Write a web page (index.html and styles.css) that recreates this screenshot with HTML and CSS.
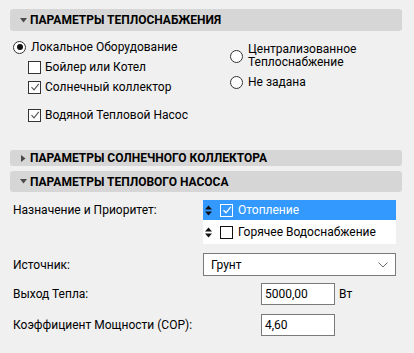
FILE: index.html
```html
<!DOCTYPE html>
<html lang="ru">
<head>
<meta charset="utf-8">
<link rel="stylesheet" href="styles.css">
</head>
<body>
<div class="panel">
  <div class="hdr hdr-tall">
    <svg class="tri" width="7" height="5" viewBox="0 0 7 5"><path d="M0 0H7L3.5 4.5Z" fill="#4a4a4a"/></svg>
    <span>ПАРАМЕТРЫ ТЕПЛОСНАБЖЕНИЯ</span>
  </div>
  <div class="supply">
    <div class="col-left">
      <div class="row"><span class="radio on"></span><span>Локальное Оборудование</span></div>
      <div class="row sub"><span class="cb"></span><span>Бойлер или Котел</span></div>
      <div class="row sub"><span class="cb"><svg viewBox="0 0 10 10" width="10" height="10"><path d="M1.5 5.2L4 7.8L8.8 1.8" fill="none" stroke="#555" stroke-width="1.1"/></svg></span><span>Солнечный коллектор</span></div>
      <div class="row sub gap"><span class="cb"><svg viewBox="0 0 10 10" width="10" height="10"><path d="M1.5 5.2L4 7.8L8.8 1.8" fill="none" stroke="#555" stroke-width="1.1"/></svg></span><span>Водяной Тепловой Насос</span></div>
    </div>
    <div class="col-right">
      <div class="row two"><span class="radio"></span><span class="lines">Централизованное<br>Теплоснабжение</span></div>
      <div class="row r2"><span class="radio"></span><span>Не задана</span></div>
    </div>
  </div>
  <div class="hdr hdr-short">
    <svg class="tri" width="5" height="7" viewBox="0 0 5 7"><path d="M0 0V7L4.5 3.5Z" fill="#4a4a4a"/></svg>
    <span>ПАРАМЕТРЫ СОЛНЕЧНОГО КОЛЛЕКТОРА</span>
  </div>
  <div class="hdr hdr-mid">
    <svg class="tri" width="7" height="5" viewBox="0 0 7 5"><path d="M0 0H7L3.5 4.5Z" fill="#4a4a4a"/></svg>
    <span>ПАРАМЕТРЫ ТЕПЛОВОГО НАСОСА</span>
  </div>
  <div class="pump">
    <div class="frow f-list">
      <span class="lbl lbl-list">Назначение и Приоритет:</span>
      <div class="listbox">
        <div class="li sel">
          <svg class="ud" width="7" height="11" viewBox="0 0 7 11"><path d="M0 4.5H7L3.5 0.5Z M0 6.5H7L3.5 10.5Z" fill="#111"/></svg>
          <span class="cb cb-w"><svg viewBox="0 0 10 10" width="10" height="10"><path d="M1.5 5.2L4 7.8L8.8 1.8" fill="none" stroke="#fff" stroke-width="1.3"/></svg></span>
          <span>Отопление</span>
        </div>
        <div class="li">
          <svg class="ud" width="7" height="11" viewBox="0 0 7 11"><path d="M0 4.5H7L3.5 0.5Z M0 6.5H7L3.5 10.5Z" fill="#111"/></svg>
          <span class="cb cb-b"></span>
          <span>Горячее Водоснабжение</span>
        </div>
      </div>
    </div>
    <div class="frow f-src">
      <span class="lbl">Источник:</span>
      <div class="select"><span>Грунт</span><svg width="10" height="6" viewBox="0 0 10 6"><path d="M0.5 0.5L5 5L9.5 0.5" fill="none" stroke="#666" stroke-width="1"/></svg></div>
    </div>
    <div class="frow f-in">
      <span class="lbl">Выход Тепла:</span>
      <div class="inp">5000,00</div>
      <span class="unit">Вт</span>
    </div>
    <div class="frow f-in2">
      <span class="lbl">Коэффициент Мощности (COP):</span>
      <div class="inp">4,60</div>
    </div>
  </div>
</div>
</body>
</html>
```

FILE: styles.css
```css
html, body {
  margin: 0;
  padding: 0;
  background: #f0f0f0;
  width: 414px;
  height: 353px;
  overflow: hidden;
}
body {
  font-family: Roboto, "Noto Sans", sans-serif;
  font-size: 12px;
  color: #000;
}
.panel {
  padding: 9px 12px 0 10px;
}
.hdr {
  display: flex;
  align-items: center;
  background: #d6d6d6;
  border-radius: 3px;
  font-weight: bold;
  font-size: 12px;
  color: #000;
}
.hdr .tri {
  margin-left: 7px;
  width: 13px;
  flex: none;
}
.hdr-tall { height: 22px; }
.hdr-short { height: 16px; }
.hdr-mid { height: 21px; margin-top: 5px; }

.supply {
  display: flex;
  height: 119px;
}
.col-left {
  width: 220px;
  padding-top: 6px;
}
.row {
  display: flex;
  align-items: center;
  height: 20px;
  white-space: nowrap;
}
.row .radio { margin-left: 3px; margin-right: 5px; }
.row.sub { padding-left: 18px; }
.row.sub .cb { margin-right: 4px; }
.row.gap { margin-top: 8px; }

.col-right {
  padding-top: 11px;
}
.row.two { height: 28px; }
.row.two .lines { line-height: 13px; }
.row.r2 { margin-top: 2px; }
.col-right .radio { margin-left: 0; margin-right: 5px; }

.radio {
  width: 11px;
  height: 11px;
  border: 1px solid #333;
  border-radius: 50%;
  background: #fff;
  flex: none;
  position: relative;
  box-sizing: content-box;
}
.radio.on::after {
  content: "";
  position: absolute;
  left: 2.5px;
  top: 2.5px;
  width: 6px;
  height: 6px;
  border-radius: 50%;
  background: #111;
}
.cb {
  width: 11px;
  height: 11px;
  border: 1px solid #333;
  background: #fff;
  flex: none;
  display: flex;
  align-items: center;
  justify-content: center;
}
.cb-w {
  background: transparent;
  border-color: #fff;
}
.cb-b { border-color: #111; }

.pump { padding-top: 8px; }
.frow {
  display: flex;
  align-items: center;
}
.lbl {
  width: 190px;
  padding-left: 3px;
  flex: none;
}
.f-list { align-items: flex-start; }
.lbl-list { margin-top: 3px; }
.listbox {
  width: 193px;
  background: #fff;
}
.li {
  display: flex;
  align-items: center;
  height: 21px;
}
.li:last-child { height: 24px; }
.li.sel {
  background: #3399ff;
  color: #fff;
  height: 20px;
}
.li .ud { margin-left: 2px; margin-right: 8px; }
.li .cb { margin-right: 5px; }

.f-src { margin-top: 9px; }
.select {
  border: 1px solid #7a7a7a;
  background: #fff;
  display: flex;
  align-items: center;
  justify-content: space-between;
  padding: 0 7px;
  box-sizing: border-box;
  width: 193px;
  height: 23px;
}
.f-in { margin-top: 7px; }
.f-in2 { margin-top: 9px; }
.f-in .lbl, .f-in2 .lbl { width: 248px; }
.inp {
  width: 74px;
  height: 22px;
  box-sizing: border-box;
  border: 1px solid #7a7a7a;
  background: #fff;
  padding-left: 3px;
  display: flex;
  align-items: center;
}
.unit { margin-left: 4px; }
```
